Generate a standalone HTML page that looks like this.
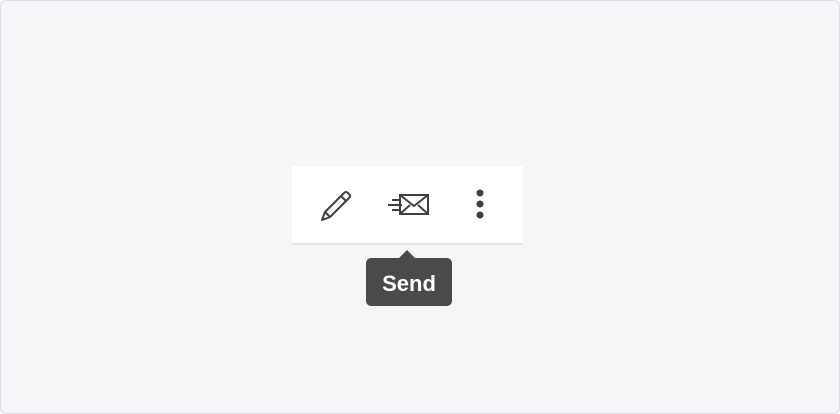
<!DOCTYPE html>
<html><head><style>
html,body{margin:0;padding:0}
body{width:840px;height:414px;background:#fff;position:relative;overflow:hidden;font-family:"Liberation Sans",sans-serif}
.frame{position:absolute;left:0;top:0;width:838px;height:412px;border:1px solid #dcdee2;border-radius:6px;background:#f5f6f8}
.bar{position:absolute;left:292px;top:166px;width:231px;height:77px;background:#fff;border-bottom:2px solid #e3e5e8}
.tip{position:absolute;left:366px;top:258px;width:86px;height:48px;background:#4a4a4a;border-radius:5px;color:#fff;font-weight:bold;font-size:22px;line-height:52px;text-align:center}
.arrow{position:absolute;left:399px;top:250px;width:0;height:0;border-left:8px solid transparent;border-right:8px solid transparent;border-bottom:8px solid #4a4a4a}
svg{position:absolute}
</style></head><body>
<div class="frame"></div>
<div class="bar"></div>
<svg style="left:318px;top:188px" width="36" height="36" viewBox="0 0 36 36" fill="none" stroke="#3f3f3f" stroke-width="2" stroke-linejoin="round">
<path d="M4 32 L7 24 L26 5 Q28 3 30 5 L31 6 Q33 8 31 10 L12 29 Z"/>
<path d="M23 8 L28 13"/><path d="M7 24 L12 29"/>
</svg>
<svg style="left:386px;top:192px" width="46" height="26" viewBox="0 0 46 26" fill="none" stroke="#3f3f3f" stroke-width="2">
<rect x="14" y="3" width="28" height="19"/>
<path d="M14 3 L28 14 L42 3"/><path d="M14 22 L24 13"/><path d="M42 22 L32 13"/>
<path d="M6 8 H14"/><path d="M2 13 H16"/><path d="M6 18 H14"/>
</svg>
<svg style="left:474px;top:188px" width="12" height="32"><circle cx="6" cy="5" r="3.5" fill="#3f3f3f"/><circle cx="6" cy="16" r="3.5" fill="#3f3f3f"/><circle cx="6" cy="27" r="3.5" fill="#3f3f3f"/></svg>
<div class="arrow"></div>
<div class="tip">Send</div>
</body></html>
